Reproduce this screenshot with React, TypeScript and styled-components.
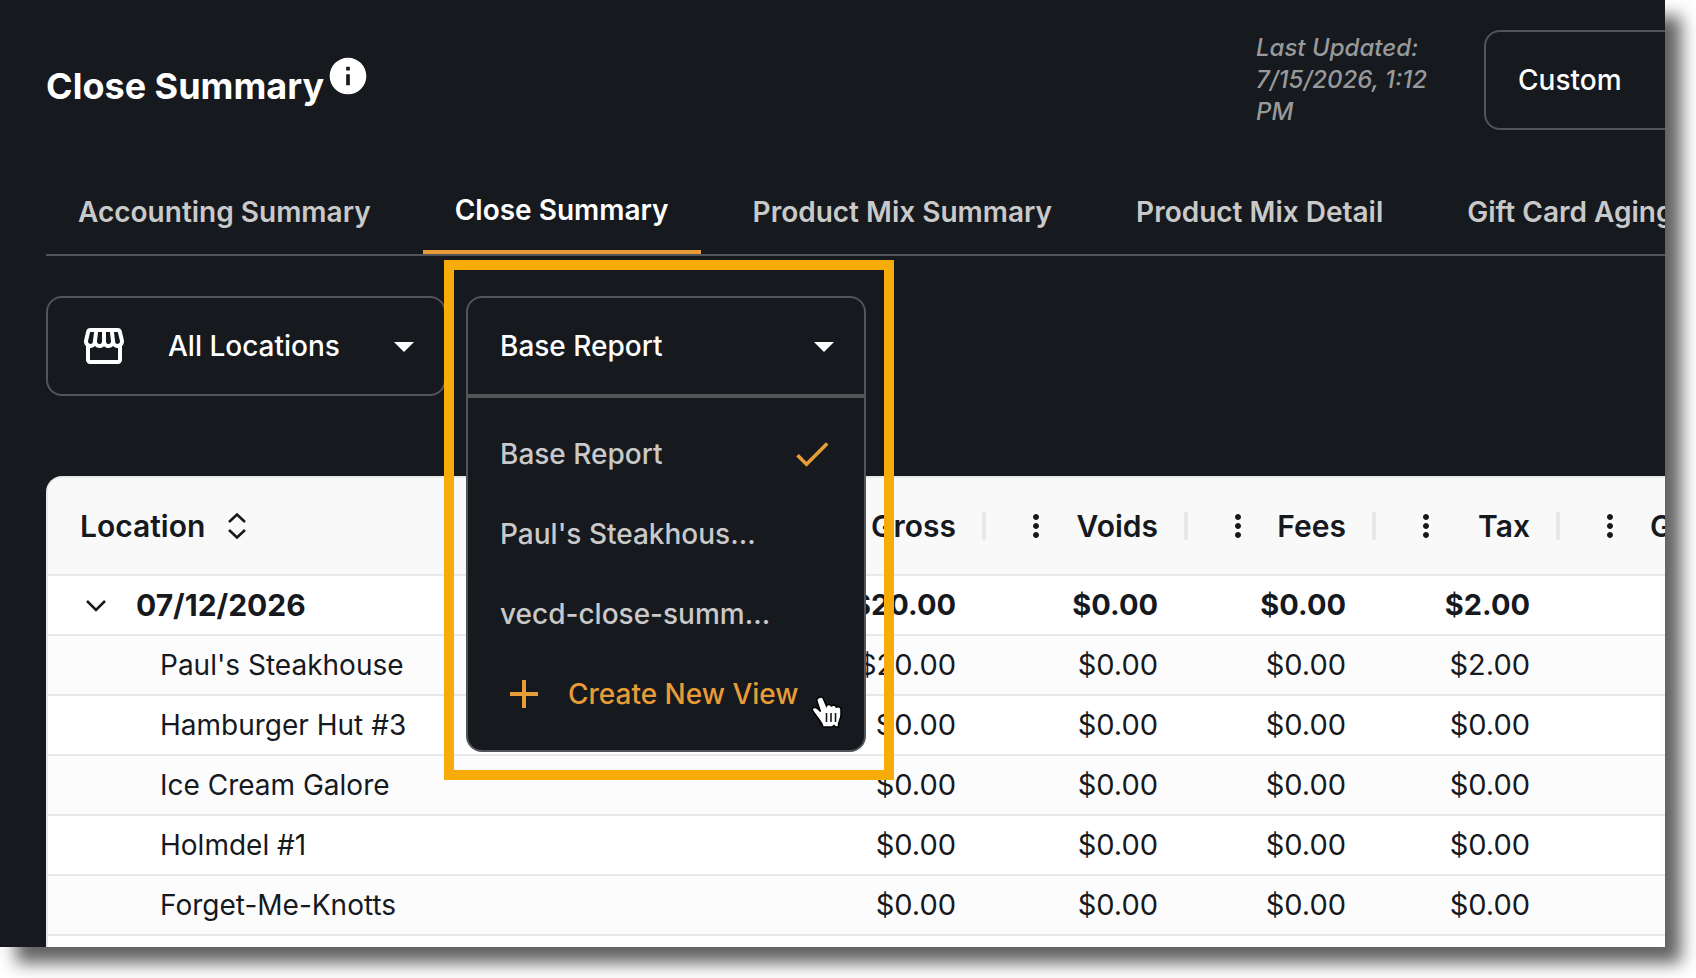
import React from 'react';
import styled, { createGlobalStyle, css } from 'styled-components';
import { MdAdd, MdArrowDropDown, MdCheck, MdInfo, MdMoreVert, MdOutlineStorefront } from 'react-icons/md';

const ink = '#16191e';
const line = '#535458';
const amber = '#e89c38';
const rule = '#e8e8e8';

const Global = createGlobalStyle`
  *, *::before, *::after { box-sizing: border-box; }
  body {
    margin: 0;
    background: #fff;
    color: #fff;
    font-family: Inter, "Liberation Sans", sans-serif;
    font-size: 28px;
    font-weight: 500;
    line-height: 40px;
  }
  button, select { font: inherit; color: inherit; }
`;

const Stage = styled.div`
  height: 100vh;
  padding: 0 31px 31px 0;
  overflow: hidden;
`;

const Screen = styled.main`
  height: 100%;
  padding-left: 46px;
  display: flex;
  flex-direction: column;
  background: ${ink};
  box-shadow: 16px 16px 16px rgba(0, 0, 0, 0.62);
`;

const Clip = styled.div`
  flex: 1;
  min-height: 0;
  overflow: hidden;
`;

const Header = styled.header`
  display: flex;
  align-items: flex-start;
  padding-top: 30px;
  height: 174px;
`;

const Title = styled.h1`
  flex: 1;
  display: flex;
  margin: 0;
  padding-top: 24px;
  font-size: 36px;
  line-height: 64px;
  font-weight: 700;
`;

const InfoButton = styled.button`
  align-self: flex-start;
  display: flex;
  padding: 0;
  margin-left: 2px;
  border: 0;
  background: none;
`;

const Updated = styled.p`
  width: 180px;
  margin: 2px 48px 0 0;
  font-size: 24px;
  line-height: 32px;
  font-style: italic;
  color: #98999b;
`;

const RangeClip = styled.div`
  width: 181px;
  overflow: hidden;
`;

const Field = styled.div<{ $open?: boolean }>`
  position: relative;
  display: flex;
  align-items: center;
  width: 400px;
  height: 100px;
  border: 2px solid ${line};
  border-radius: ${p => (p.$open ? '16px 16px 0 0' : '16px')};
`;

const fieldText = css`
  width: 100%;
  height: 100%;
  padding: 0 64px 0 32px;
  border: 0;
  background: none;
  text-align: left;
`;

const Select = styled.select<{ $icon?: boolean }>`
  appearance: none;
  ${fieldText}
  ${p => p.$icon && 'padding-left: 120px;'}
`;

const PickerButton = styled.button`
  ${fieldText}
`;

const LeadIcon = styled.span`
  position: absolute;
  left: 32px;
  display: flex;
  pointer-events: none;
`;

const Caret = styled.span`
  position: absolute;
  right: 16px;
  display: flex;
  pointer-events: none;
`;

const Tabs = styled.nav`
  display: flex;
  gap: 20px;
  height: 82px;
  border-bottom: 2px solid ${line};
  overflow: hidden;
`;

const Tab = styled.a<{ $active?: boolean }>`
  flex: none;
  padding: ${p => (p.$active ? '16px' : '18px')} 32px 0;
  font-weight: 600;
  white-space: nowrap;
  text-decoration: none;
  color: ${p => (p.$active ? '#fff' : '#c9c9c9')};
  border-bottom: ${p => (p.$active ? `4px solid ${amber}` : '0')};
`;

const Filters = styled.section`
  display: flex;
  gap: 20px;
  padding: 40px 0 80px;
`;

const Picker = styled.div`
  position: relative;
  z-index: 1;
`;

const Menu = styled.ul`
  position: absolute;
  top: 100%;
  left: 0;
  width: 100%;
  margin: 0;
  padding: 16px 0;
  list-style: none;
  background: ${ink};
  border: 2px solid ${line};
  border-radius: 0 0 16px 16px;
`;

const Option = styled.li`
  display: flex;
  align-items: center;
  justify-content: space-between;
  height: 80px;
  padding: 0 30px 0 32px;
  color: #c9c9c9;
`;

const CreateButton = styled.button`
  display: flex;
  align-items: center;
  gap: 20px;
  width: 100%;
  padding: 0;
  border: 0;
  background: none;
  color: ${amber};
  cursor: pointer;
`;

const Highlight = styled.div`
  position: absolute;
  top: -36px;
  left: -22px;
  width: 450px;
  height: 520px;
  border: 10px solid #f8ac0a;
  pointer-events: none;
`;

const Pointer = styled.svg`
  position: absolute;
  left: 344px;
  top: 397px;
  pointer-events: none;
`;

const Panel = styled.section`
  overflow: hidden;
  border: 2px solid ${rule};
  border-right: 0;
  border-radius: 16px 0 0 0;
  background: #fff;
  color: ${ink};
`;

const Table = styled.table`
  width: 100%;
  table-layout: fixed;
  border-collapse: separate;
  border-spacing: 0;
`;

const Col = styled.col<{ $width?: number }>`
  width: ${p => (p.$width ? `${p.$width}px` : 'auto')};
`;

const Th = styled.th`
  height: 98px;
  padding: 0;
  background: #f9f9f9;
  border-bottom: 2px solid ${rule};
  font-size: 30px;
  font-weight: 600;
  text-align: left;
  white-space: nowrap;
  overflow: hidden;
`;

const HeadCell = styled.div<{ $spread?: boolean }>`
  display: flex;
  align-items: center;
  justify-content: ${p => (p.$spread ? 'space-between' : 'flex-start')};
  gap: ${p => (p.$spread ? '0' : '22px')};
  padding-left: 32px;
`;

const HeadEnd = styled.span`
  display: flex;
  align-items: center;
  gap: 26px;
  margin-left: auto;
  &::after {
    content: '';
    width: 4px;
    height: 28px;
    background: ${rule};
  }
`;

const IconButton = styled.button`
  display: flex;
  padding: 0;
  border: 0;
  background: none;
`;

const Row = styled.tr<{ $group?: boolean }>`
  font-weight: ${p => (p.$group ? 700 : 400)};
  &:nth-child(even) { background: #fcfcfc; }
`;

const Td = styled.td`
  height: 60px;
  padding: 0 30px 0 0;
  border-bottom: 2px solid ${rule};
  font-size: 29px;
  text-align: right;
  white-space: nowrap;
`;

const RowHead = styled.th<{ $group?: boolean }>`
  height: 60px;
  padding: 0 0 0 ${p => (p.$group ? '32px' : '112px')};
  border-bottom: 2px solid ${rule};
  font-size: ${p => (p.$group ? '30px' : '28px')};
  font-weight: inherit;
  text-align: left;
`;

const GroupLabel = styled.span`
  display: flex;
  align-items: center;
  gap: 20px;
`;

const Stroke = ({ d, w = 36, h = 36 }: { d: string; w?: number; h?: number }) => (
  <svg width={w} height={h} viewBox={`0 0 ${w} ${h}`} fill="none" stroke="currentColor" strokeWidth="2.6" aria-hidden="true">
    <path d={d} />
  </svg>
);

const columns = [
  { name: 'Voids', width: 202 },
  { name: 'Fees', width: 188 },
  { name: 'Tax', width: 184 },
];

const rows = [
  { name: '07/12/2026', values: ['$20.00', '$0.00', '$0.00', '$2.00'], group: true },
  { name: "Paul's Steakhouse", values: ['$20.00', '$0.00', '$0.00', '$2.00'] },
  { name: 'Hamburger Hut #3', values: ['$0.00', '$0.00', '$0.00', '$0.00'] },
  { name: 'Ice Cream Galore', values: ['$0.00', '$0.00', '$0.00', '$0.00'] },
  { name: 'Holmdel #1', values: ['$0.00', '$0.00', '$0.00', '$0.00'] },
  { name: 'Forget-Me-Knotts', values: ['$0.00', '$0.00', '$0.00', '$0.00'] },
  { name: '', values: ['', '', '', ''] },
];

const tabs = ['Accounting Summary', 'Close Summary', 'Product Mix Summary', 'Product Mix Detail', 'Gift Card Aging'];

function HandPointer() {
  return (
    <Pointer width="36" height="40" viewBox="0 0 36 40" aria-hidden="true">
      <path
        d="M9 4.500C11 3.500 12.800 4 13.500 6L16.500 13C17.500 11 20.500 11 21.300 13 23 11.500 25.800 12 26.300 14.200 28.500 13 31 14 31 16.500V22C31 25 29 28 28.500 31V34H25.500L24 32.500 22 34H13C12 29.500 8.500 26 6 22.500 4 19.500 1.500 17.500 2.500 15.500 3.500 13.500 6.500 14.500 8.500 16.500L10.500 18.500 7 8.500C6.300 6.500 7.500 5 9 4.500Z"
        fill="#fff" stroke="#000" strokeWidth="1.500"
      />
      <path d="M16.500 20v9M21 20v9M25.500 20v9" stroke="#16191e" strokeWidth="1.600" />
    </Pointer>
  );
}

const ColumnMenu = ({ name }: { name: string }) => (
  <IconButton aria-label={`${name} column menu`}><MdMoreVert size={36} /></IconButton>
);

export default function App() {
  return (
    <Stage>
      <Global />
      <Screen>
        <Header>
          <Title>
            Close Summary
            <InfoButton aria-label="About this report"><MdInfo size={44} /></InfoButton>
          </Title>
          <Updated>Last Updated: 7/15/2026, 1:12 PM</Updated>
          <RangeClip>
            <Field>
              <Select aria-label="Date range"><option>Custom</option></Select>
            </Field>
          </RangeClip>
        </Header>
        <Tabs aria-label="Reports">
          {tabs.map(t => (
            <Tab key={t} href="#" $active={t === 'Close Summary'}>{t}</Tab>
          ))}
        </Tabs>
        <Filters>
          <Field>
            <LeadIcon><MdOutlineStorefront size={48} /></LeadIcon>
            <Select $icon aria-label="Locations"><option>All Locations</option></Select>
            <Caret><MdArrowDropDown size={48} /></Caret>
          </Field>
          <Picker>
            <Field $open>
              <PickerButton aria-haspopup="listbox" aria-expanded="true">Base Report</PickerButton>
              <Caret><MdArrowDropDown size={48} /></Caret>
            </Field>
            <Menu aria-label="Report views">
              <Option>Base Report<MdCheck size={44} color={amber} /></Option>
              <Option>Paul's Steakhous...</Option>
              <Option>vecd-close-summ...</Option>
              <Option><CreateButton><MdAdd size={48} />Create New View</CreateButton></Option>
            </Menu>
            <Highlight />
            <HandPointer />
          </Picker>
        </Filters>
        <Clip>
          <Panel>
            <Table>
              <colgroup>
                <Col $width={738} />
                <Col $width={200} />
                {columns.map(c => <Col key={c.name} $width={c.width} />)}
                <Col />
              </colgroup>
              <thead>
                <tr>
                  <Th scope="col">
                    <HeadCell>
                      Location
                      <IconButton aria-label="Sort by location">
                        <Stroke w={20} d="M2 14l8-7.500 8 7.500M2 22l8 7.500 8-7.500" />
                      </IconButton>
                    </HeadCell>
                  </Th>
                  <Th scope="col"><HeadCell><HeadEnd>Gross</HeadEnd></HeadCell></Th>
                  {columns.map(c => (
                    <Th key={c.name} scope="col">
                      <HeadCell $spread>
                        <ColumnMenu name={c.name} />
                        <HeadEnd>{c.name}</HeadEnd>
                      </HeadCell>
                    </Th>
                  ))}
                  <Th scope="col">
                    <HeadCell>
                      <ColumnMenu name="G" />
                      G
                    </HeadCell>
                  </Th>
                </tr>
              </thead>
              <tbody>
                {rows.map((r, i) => (
                  <Row key={i} $group={r.group}>
                    <RowHead scope="row" $group={r.group}>
                      {r.group ? (
                        <GroupLabel>
                          <IconButton aria-label="Collapse group"><Stroke d="M7 14l9 9 9-9" /></IconButton>
                          {r.name}
                        </GroupLabel>
                      ) : r.name}
                    </RowHead>
                    {r.values.map((v, j) => <Td key={j}>{v}</Td>)}
                    <Td />
                  </Row>
                ))}
              </tbody>
            </Table>
          </Panel>
        </Clip>
      </Screen>
    </Stage>
  );
}
